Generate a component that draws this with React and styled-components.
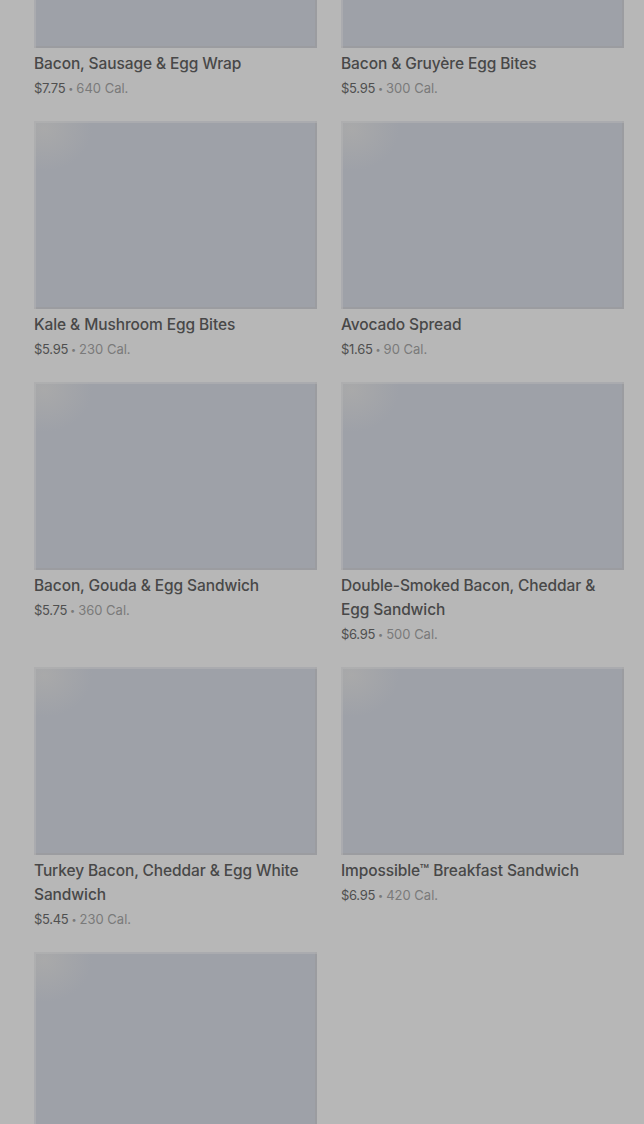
import React from "react";
import styled, { createGlobalStyle } from "styled-components";

const GlobalStyle = createGlobalStyle`
  html, body {
    margin: 0;
    padding: 0;
    background: #b7b7b7;
    overflow: hidden;
  }
  body {
    font-family: Inter, "Noto Sans", "Liberation Sans", sans-serif;
  }
`;

const Page = styled.div`
  width: 644px;
  height: 1124px;
  overflow: hidden;
  background: #b7b7b7;
`;

const Grid = styled.div`
  display: grid;
  grid-template-columns: 283px 283px;
  column-gap: 24px;
  row-gap: 23px;
  align-items: start;
  padding-left: 34px;
  margin-top: -140px;
`;

const Card = styled.div`
  display: flex;
  flex-direction: column;
`;

const Thumb = styled.div`
  height: 188px;
  background:
    radial-gradient(ellipse 48px 42px at 10px 8px, rgba(170, 170, 170, 0.9), rgba(170, 170, 170, 0) 100%),
    #9ea1a8;
  box-shadow:
    inset 2px 2px 0 rgba(180, 180, 180, 0.55),
    inset -2px -2px 0 rgba(150, 150, 150, 0.45);
`;

const Name = styled.div`
  margin-top: 4px;
  font-size: 15.5px;
  line-height: 24px;
  font-weight: 500;
  color: #484848;
  letter-spacing: -0.1px;
`;

const Meta = styled.div`
  display: flex;
  align-items: center;
  gap: 3px;
  height: 20px;
  margin-top: 2px;
  font-size: 13px;
  color: #7a7a7a;
  white-space: nowrap;
`;

const Price = styled.span`
  color: #4f4f4f;
  letter-spacing: -0.3px;
`;

const Dot = styled.span`
  font-size: 9px;
  line-height: 1;
`;

const items = [
  { name: "Bacon, Sausage & Egg Wrap", price: "$7.75", cal: "640" },
  { name: "Bacon & Gruyère Egg Bites", price: "$5.95", cal: "300" },
  { name: "Kale & Mushroom Egg Bites", price: "$5.95", cal: "230" },
  { name: "Avocado Spread", price: "$1.65", cal: "90" },
  { name: "Bacon, Gouda & Egg Sandwich", price: "$5.75", cal: "360" },
  { name: "Double-Smoked Bacon, Cheddar & Egg Sandwich", price: "$6.95", cal: "500" },
  { name: "Turkey Bacon, Cheddar & Egg White Sandwich", price: "$5.45", cal: "230" },
  { name: "Impossible™ Breakfast Sandwich", price: "$6.95", cal: "420" },
];

const MenuCard = ({ item }) => (
  <Card>
    <Thumb />
    <Name>{item.name}</Name>
    <Meta>
      <Price>{item.price}</Price>
      <Dot>•</Dot>
      <span>{item.cal} Cal.</span>
    </Meta>
  </Card>
);

const App = () => (
  <Page>
    <GlobalStyle />
    <Grid>
      {items.map((item) => (
        <MenuCard key={item.name} item={item} />
      ))}
      <Card>
        <Thumb />
      </Card>
    </Grid>
  </Page>
);

export default App;
